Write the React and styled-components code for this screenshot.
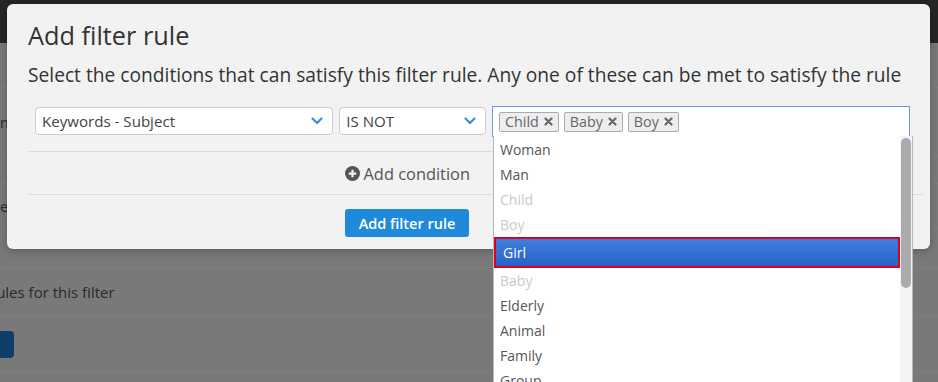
import React from "react";
import styled, { createGlobalStyle } from "styled-components";

const GlobalStyle = createGlobalStyle`
  html, body { margin: 0; padding: 0; }
  body { font-family: "Open Sans", "Noto Sans", sans-serif; }
  * { box-sizing: border-box; }
`;

const Page = styled.div`
  position: relative;
  width: 938px;
  height: 382px;
  overflow: hidden;
  background: #f3f3f3;
`;

const Header = styled.div`
  height: 43px;
  background: #4a4a4a;
`;

const BgRow = styled.div`
  height: ${(p) => p.$h}px;
  border-bottom: 1px solid #ffffff;
  display: flex;
  align-items: center;
  color: #555;
  font-size: 15px;
  white-space: nowrap;
`;

const BgText = styled.span`
  margin-left: ${(p) => p.$shift || 0}px;
`;

const BgButton = styled.div`
  width: 40px;
  height: 27px;
  margin-left: -26px;
  border-radius: 4px;
  background: #1a7ad0;
`;

const Overlay = styled.div`
  position: absolute;
  inset: 0;
  background: rgba(0, 0, 0, 0.5);
`;

const Modal = styled.div`
  position: absolute;
  left: 7px;
  top: 4px;
  width: 923px;
  height: 245px;
  background: #f2f2f2;
  border-radius: 6px;
  padding: 15px 20px 0 21px;
  box-shadow: 0 2px 8px rgba(0, 0, 0, 0.25);
`;

const Title = styled.h2`
  margin: 0;
  font-weight: 400;
  font-size: 25.3px;
  line-height: 32px;
  color: #333;
`;

const Description = styled.p`
  margin: 11px 0 0;
  font-size: 19.2px;
  line-height: 26px;
  color: #333;
  white-space: nowrap;
`;

const ConditionRow = styled.div`
  display: flex;
  gap: 6px;
  margin-top: 19px;
  padding: 0 0 14px 7px;
  border-bottom: 1px solid #dcdcdc;
`;

const Select = styled.div`
  width: ${(p) => p.$w}px;
  height: 28px;
  background: #fff;
  border: 1px solid #cccccc;
  border-radius: 4px;
  display: flex;
  align-items: center;
  justify-content: space-between;
  padding: 0 9px 0 6px;
  font-size: 15.1px;
  color: #444;
`;

const TagInput = styled.div`
  width: 419px;
  height: 31px;
  margin-top: -1px;
  background: #fff;
  border: 1px solid #6f9ad8;
  display: flex;
  align-items: center;
  gap: 5px;
  padding: 0 6px;
`;

const Tag = styled.span`
  display: inline-flex;
  align-items: center;
  gap: 5px;
  height: 20px;
  padding: 0 5px 0 5px;
  background: #eeeeee;
  border: 1px solid #aaaaaa;
  border-radius: 2px;
  font-size: 14.3px;
  color: #666;
`;

const Footer = styled.div`
  width: 442px;
  display: flex;
  flex-direction: column;
  align-items: flex-end;
`;

const AddCondition = styled.div`
  height: 42px;
  display: flex;
  align-items: center;
  gap: 4px;
  font-size: 16.4px;
  color: #555;
`;

const Divider = styled.div`
  width: 895px;
  border-top: 1px solid #dcdcdc;
  align-self: flex-start;
`;

const PrimaryButton = styled.button`
  margin-top: 14px;
  margin-right: 1px;
  width: 124px;
  height: 28px;
  border: none;
  border-radius: 3px;
  background: #1f8ad9;
  color: #fff;
  font-family: inherit;
  font-size: 14.5px;
  font-weight: 600;
  padding: 0;
`;

const Dropdown = styled.div`
  position: absolute;
  left: 493px;
  top: 136px;
  width: 420px;
  height: 260px;
  background: #fff;
  border: 1px solid #b8b8b8;
  border-top: none;
  display: flex;
`;

const OptionList = styled.ul`
  list-style: none;
  margin: 0;
  padding: 1px 0 0;
  flex: 1;
`;

const Option = styled.li`
  height: ${(p) => (p.$active ? 31 : 25)}px;
  display: flex;
  align-items: center;
  padding-left: ${(p) => (p.$active ? 7 : 6)}px;
  font-size: 14px;
  color: ${(p) => (p.$active ? "#fff" : p.$disabled ? "#c9c9c9" : "#555")};
  background: ${(p) =>
    p.$active ? "linear-gradient(#3d7fe0, #2a62c4)" : "transparent"};
  border: ${(p) => (p.$active ? "2px solid #e0001b" : "none")};
`;

const ScrollTrack = styled.div`
  width: 12px;
  padding: 2px 1px;
  background: #f4f4f4;
`;

const ScrollThumb = styled.div`
  width: 10px;
  height: 150px;
  border-radius: 5px;
  background: #ababab;
`;

const Chevron = () => (
  <svg width="12" height="8" viewBox="0 0 12 8">
    <path d="M1.5 1.5 L6 6 L10.5 1.5" fill="none" stroke="#3b8fdc" strokeWidth="2.2" strokeLinecap="round" strokeLinejoin="round" />
  </svg>
);

const Cross = () => (
  <svg width="9" height="9" viewBox="0 0 9 9">
    <path d="M1.5 1.5 L7.5 7.5 M7.5 1.5 L1.5 7.5" stroke="#666" strokeWidth="2.2" strokeLinecap="round" />
  </svg>
);

const PlusCircle = () => (
  <svg width="15" height="15" viewBox="0 0 16 16">
    <circle cx="8" cy="8" r="8" fill="#555" />
    <path d="M8 4 V12 M4 8 H12" stroke="#f2f2f2" strokeWidth="2.4" />
  </svg>
);

const options = [
  { label: "Woman" },
  { label: "Man" },
  { label: "Child", disabled: true },
  { label: "Boy", disabled: true },
  { label: "Girl", active: true },
  { label: "Baby", disabled: true },
  { label: "Elderly" },
  { label: "Animal" },
  { label: "Family" },
  { label: "Group" },
];

export default function App() {
  return (
    <>
      <GlobalStyle />
      <Page>
        <Header />
        <BgRow $h={45} />
        <BgRow $h={69}><BgText>m</BgText></BgRow>
        <BgRow $h={27} />
        <BgRow $h={45}><BgText>e</BgText></BgRow>
        <BgRow $h={39} />
        <BgRow $h={49}><BgText $shift={-10}>rules for this filter</BgText></BgRow>
        <BgRow $h={56}><BgButton /></BgRow>

        <Overlay />

        <Modal>
          <Title>Add filter rule</Title>
          <Description>
            Select the conditions that can satisfy this filter rule. Any one of these can be met to satisfy the rule
          </Description>
          <ConditionRow>
            <Select $w={299}>
              Keywords - Subject
              <Chevron />
            </Select>
            <Select $w={147}>
              IS NOT
              <Chevron />
            </Select>
            <TagInput>
              {["Child", "Baby", "Boy"].map((t) => (
                <Tag key={t}>
                  {t}
                  <Cross />
                </Tag>
              ))}
            </TagInput>
          </ConditionRow>
          <Footer>
            <AddCondition>
              <PlusCircle />
              Add condition
            </AddCondition>
            <Divider />
            <PrimaryButton>Add filter rule</PrimaryButton>
          </Footer>
        </Modal>

        <Dropdown>
          <OptionList>
            {options.map((o) => (
              <Option key={o.label} $active={o.active} $disabled={o.disabled}>
                {o.label}
              </Option>
            ))}
          </OptionList>
          <ScrollTrack>
            <ScrollThumb />
          </ScrollTrack>
        </Dropdown>
      </Page>
    </>
  );
}
